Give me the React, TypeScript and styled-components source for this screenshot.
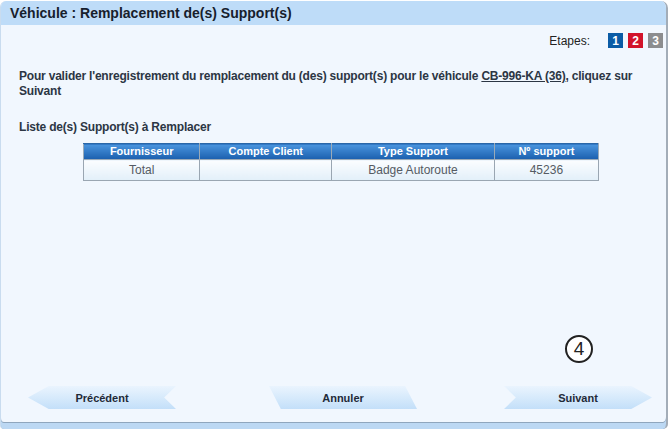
import * as React from "react";
import styled, { createGlobalStyle } from "styled-components";

const GlobalStyle = createGlobalStyle`
  body {
    margin: 0;
    background: #ffffff;
    font-family: "Liberation Sans", Arial, sans-serif;
  }
`;

const Window = styled.div`
  box-sizing: border-box;
  width: 668px;
  height: 428px;
  margin-top: 1px;
  display: flex;
  flex-direction: column;
  background: #f1f7fe;
  border-left: 1px solid #c9dcef;
  border-right: 2px solid #a3adb8;
  border-radius: 6px 7px 5px 4px;
  box-shadow: inset 0 -6px 0 #bcd8f3, inset 0 -7px 0 #8fa6bd;
  overflow: hidden;
`;

const TitleBar = styled.div`
  height: 24px;
  display: flex;
  align-items: center;
  padding-left: 9px;
  background: #bedcf8;
  font-weight: bold;
  font-size: 14px;
  color: #17202c;
`;

const StepsRow = styled.div`
  display: flex;
  justify-content: flex-end;
  align-items: center;
  margin-top: 8px;
  padding-right: 3px;
  height: 15px;
  font-size: 12px;
  color: #222;
`;

const StepsLabel = styled.span`
  margin-right: 13px;
`;

const Step = styled.span<{ $color: string }>`
  width: 15px;
  height: 15px;
  margin-left: 5px;
  display: flex;
  align-items: center;
  justify-content: center;
  background: ${({ $color }) => $color};
  color: #fff;
  font-weight: bold;
  font-size: 12px;
`;

const Intro = styled.p`
  margin: 21px 8px 0 18px;
  font-weight: bold;
  font-size: 12px;
  line-height: 15px;
  letter-spacing: -0.2px;
  color: #2c3644;
`;

const VehicleLink = styled.a`
  color: #2c3644;
  text-decoration: underline;
`;

const SectionTitle = styled.div`
  margin: 21px 0 0 18px;
  font-weight: bold;
  font-size: 12px;
  line-height: 15px;
  letter-spacing: -0.2px;
  color: #2c3644;
`;

const Table = styled.table`
  margin: 8px 0 0 82px;
  width: 516px;
  border-collapse: collapse;
  font-size: 12px;
`;

const HeadCell = styled.th<{ $w: number }>`
  width: ${({ $w }) => $w}px;
  height: 15px;
  padding: 0;
  background: linear-gradient(#4a95de, #1b5fae);
  border: 1px solid #9aaab8;
  border-top: 1px solid #2a67a8;
  color: #fff;
  font-size: 11px;
  font-weight: bold;
  line-height: 13px;
`;

const Cell = styled.td`
  height: 20px;
  padding: 0;
  text-align: center;
  background: linear-gradient(#fbfdff 0%, #e2eff9 100%);
  border: 1px solid #9aa6b2;
  color: #555b63;
`;

const MarkerRow = styled.div`
  display: flex;
  justify-content: flex-end;
  margin-top: 154px;
  padding-right: 73px;
`;

const Marker = styled.div`
  box-sizing: border-box;
  width: 28px;
  height: 28px;
  border: 2px solid #222;
  border-radius: 50%;
  background: #fff;
  display: flex;
  align-items: center;
  justify-content: center;
  font-size: 19px;
  color: #222;
`;

const ButtonRow = styled.div`
  display: flex;
  align-items: center;
  margin-top: 23px;
  padding-left: 27px;
`;

const shapes = {
  prev: "polygon(0 50%, 14% 0, 100% 0, 92% 50%, 100% 100%, 14% 100%)",
  cancel: "polygon(0 0, 92% 0, 100% 100%, 8% 100%)",
  next: "polygon(0 0, 86% 0, 100% 50%, 86% 100%, 0 100%, 8% 50%)",
};

const NavButton = styled.button<{ $shape: keyof typeof shapes; $gap: number }>`
  width: 148px;
  height: 23px;
  margin-left: ${({ $gap }) => $gap}px;
  border: none;
  padding: 0;
  clip-path: ${({ $shape }) => shapes[$shape]};
  background: linear-gradient(#eaf4fe 0%, #d3e8fb 60%, #c3dff9 100%);
  font-family: "Liberation Sans", Arial, sans-serif;
  font-weight: bold;
  font-size: 11px;
  color: #1f2a38;
  cursor: pointer;
`;

const rows = [{ fournisseur: "Total", compte: "", type: "Badge Autoroute", numero: "45236" }];

export default function App() {
  return (
    <>
      <GlobalStyle />
      <Window>
        <TitleBar>Véhicule : Remplacement de(s) Support(s)</TitleBar>
        <StepsRow>
          <StepsLabel>Etapes:</StepsLabel>
          <Step $color="#0b5ca6">1</Step>
          <Step $color="#d2142b">2</Step>
          <Step $color="#8c8d8f">3</Step>
        </StepsRow>
        <Intro>
          Pour valider l'enregistrement du remplacement du (des) support(s) pour le véhicule{" "}
          <VehicleLink>CB-996-KA (36)</VehicleLink>, cliquez sur Suivant
        </Intro>
        <SectionTitle>Liste de(s) Support(s) à Remplacer</SectionTitle>
        <Table>
          <thead>
            <tr>
              <HeadCell $w={116}>Fournisseur</HeadCell>
              <HeadCell $w={132}>Compte Client</HeadCell>
              <HeadCell $w={163}>Type Support</HeadCell>
              <HeadCell $w={104}>Nº support</HeadCell>
            </tr>
          </thead>
          <tbody>
            {rows.map((r) => (
              <tr key={r.numero}>
                <Cell>{r.fournisseur}</Cell>
                <Cell>{r.compte}</Cell>
                <Cell>{r.type}</Cell>
                <Cell>{r.numero}</Cell>
              </tr>
            ))}
          </tbody>
        </Table>
        <MarkerRow>
          <Marker>4</Marker>
        </MarkerRow>
        <ButtonRow>
          <NavButton $shape="prev" $gap={0}>Précédent</NavButton>
          <NavButton $shape="cancel" $gap={93}>Annuler</NavButton>
          <NavButton $shape="next" $gap={87}>Suivant</NavButton>
        </ButtonRow>
      </Window>
    </>
  );
}
